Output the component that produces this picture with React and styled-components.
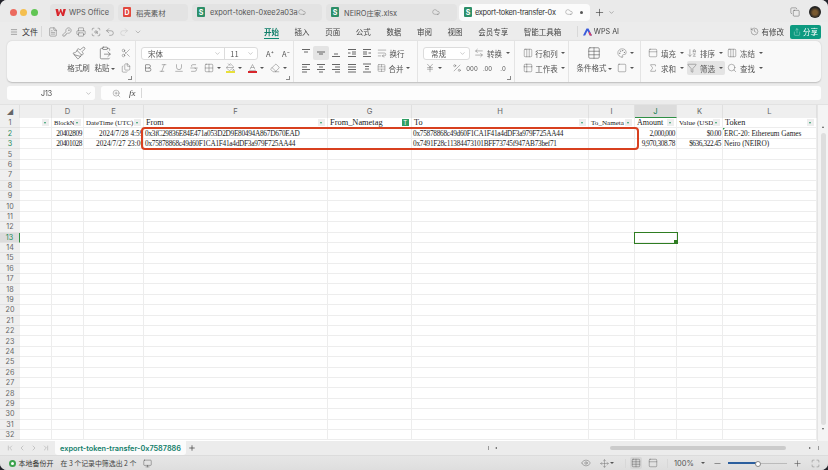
import React from 'react';
import styled, { createGlobalStyle } from 'styled-components';
import {
  Menu, FileText, KeyRound, Printer, ScanSearch, Undo2, Redo2, ChevronDown, Cloud, Plus, Copy,
  Scissors, Paintbrush, ClipboardPaste, Files, Bold, Italic, Underline, Strikethrough, Grid2x2,
  PaintBucket, Baseline, Eraser, WrapText, TableCellsMerge,
  ArrowLeftRight, JapaneseYen, Percent, Table2, Table, Palette, Square,
  Sigma, ArrowDownAZ, Filter, Search, Columns3, Share, History, ZoomIn, ChevronLeft, ChevronRight,
  ChevronFirst, ChevronLast, Eye, Move, PanelTop, Minus, Maximize, Monitor
} from 'lucide-react';

const Global = createGlobalStyle`
  html, body { margin: 0; padding: 0; background: #23232b; }
  #root { width: 828px; height: 470px; overflow: hidden; }
  * { box-sizing: border-box; }
`;

const uiFont = `"Noto Sans CJK SC", "Inter", sans-serif`;

const Win = styled.div`
  width: 828px; height: 470px; background: #ececec; border-radius: 7px; overflow: hidden;
  display: flex; flex-direction: column; font-family: ${uiFont}; color: #444; font-size: 8px;
  filter: blur(0.3px);
`;

/* title bar */
const TitleBar = styled.div`
  height: 22px; display: flex; align-items: center; padding: 2px 0 0 9.5px; flex: none; background: #eaeaea;
`;
const Lights = styled.div`display: flex; gap: 3.5px; width: 40.5px; flex: none;`;
const Light = styled.span`width: 7px; height: 7px; border-radius: 50%; background: ${p => p.$c};`;
const Tab = styled.div`
  width: ${p => p.$w}px; height: 17px; margin-right: ${p => p.$mr ?? 4}px; border-radius: 4px; flex: none;
  background: ${p => p.$active ? '#fbfbfb' : '#e3e3e3'}; display: flex; align-items: center; gap: 3px;
  padding: 0 ${p => p.$pr ?? 6}px 0 5px; font-family: "Inter", "Noto Sans CJK SC", sans-serif; font-size: 7.4px; color: #555;
  white-space: nowrap;
`;
const TabLabel = styled.span`flex: 1; min-width: 0; color: ${p => p.$c ?? '#555'}; letter-spacing: ${p => p.$track ?? 0}px;`;
const Badge = styled.span`
  width: 8px; height: 10px; background: ${p => p.$c}; border-radius: 1px; flex: none; color: #fff; font-size: 7px;
  display: flex; align-items: center; justify-content: center; font-weight: 700;
`;
const Spot = styled.span`width: 3px; height: 3px; border-radius: 50%; background: #555; flex: none; margin: 0 7px 0 4px;`;
const TitleRight = styled.div`margin-left: auto; display: flex; align-items: center; gap: 9px; padding-right: 7px; color: #444;`;
const Avatar = styled.span`width: 12px; height: 12px; border-radius: 50%; background: radial-gradient(circle at 50% 55%, #7a5a30 0 25%, #222 60%);`;

/* menu row */
const MenuRow = styled.div`height: 19px; display: flex; align-items: center; padding-left: 10px; flex: none;`;
const MenuFile = styled.div`display: flex; align-items: center; gap: 4px; width: 31px; font-size: 8px; color: #333;`;
const Sep = styled.span`width: 1px; height: ${p => p.$h ?? 11}px; background: #d8d8d8; flex: none; margin: 0 ${p => p.$m ?? 0}px;`;
const QuickIcons = styled.div`display: flex; align-items: center; gap: 4.4px; margin-left: 5.5px; width: 216.5px; color: #555;`;
const MenuTabs = styled.div`display: flex; align-items: center; gap: 15.6px;`;
const MenuTab = styled.span`
  font-size: 7.5px; color: ${p => p.$active ? '#0f7d68' : '#444'}; position: relative; font-weight: ${p => p.$active ? 700 : 400};
  ${p => p.$active && `&::after { content: ""; position: absolute; left: 0; right: 0; bottom: -2px; height: 1.5px; background: #0f8a72; }`}
`;
const AiTag = styled.span`display: flex; align-items: center; gap: 2px; margin-left: 5px; font-family: "Inter", sans-serif; font-size: 7.2px; color: #444;`;
const MenuRight = styled.div`margin-left: auto; display: flex; align-items: center; gap: 6px; padding-right: 7px;`;
const Modified = styled.span`display: flex; align-items: center; gap: 3px; font-size: 7.5px; color: #444;`;
const ShareBtn = styled.span`
  width: 31px; height: 14px; border-radius: 2px; background: #0d9a80; color: #fff; display: flex;
  align-items: center; justify-content: center; gap: 2px; font-size: 7.5px;
`;

/* ribbon */
const Ribbon = styled.div`
  margin: 0 7px; height: 41px; flex: none; background: #f9f9f9; border-radius: 5px; display: flex;
  box-shadow: 0 0.5px 1.5px rgba(0,0,0,.2);
`;
const Group = styled.div`
  width: ${p => p.$w}px; flex: none; padding: 5px 0 7px ${p => p.$pl ?? 0}px; display: flex; position: relative;
  ${p => !p.$last && 'border-right: 1px solid #e4e4e4;'}
  ${p => p.$launcher && `&::after { content: ""; position: absolute; right: 3px; bottom: 2px; width: 3px; height: 3px; border-right: 1px solid #888; border-bottom: 1px solid #888; }`}
`;
const Stack = styled.div`display: flex; flex-direction: column; justify-content: space-between; height: 100%; width: ${p => p.$w ? p.$w + 'px' : 'auto'}; flex: none;`;
const ToolRow = styled.div`display: flex; align-items: center; height: 14px; margin-left: ${p => p.$ml ?? 0}px;`;
const Tool = styled.div`
  width: ${p => p.$w}px; height: 14px; flex: none; display: flex; align-items: center; justify-content: ${p => p.$left ? 'flex-start' : 'center'};
  gap: ${p => p.$gap ?? 2}px; color: #555; font-size: 7.5px; white-space: nowrap; margin-left: ${p => p.$ml ?? 0}px; padding-left: ${p => p.$pl ?? 0}px;
  ${p => p.$on && 'background: #e4e4e4; border-radius: 2px;'}
`;
const Big = styled.div`
  width: ${p => p.$w}px; flex: none; display: flex; flex-direction: column; align-items: center; justify-content: space-between;
  height: 100%; color: #555; font-size: 7.5px; white-space: nowrap; line-height: 14px;
`;
const Caret = styled.span`
  display: inline-block; width: 0; height: 0; border-left: 2px solid transparent; border-right: 2px solid transparent;
  border-top: 2.5px solid #555; margin-left: 1px; flex: none; vertical-align: middle;
`;
const Field = styled.div`
  width: ${p => p.$w}px; height: 13px; border: 1px solid #dcdcdc; background: #fff; border-radius: 3px; display: flex; align-items: center; flex: none; font-size: 7.5px; color: #555;
`;
const FieldPart = styled.div`
  width: ${p => p.$w}px; display: flex; align-items: center; justify-content: space-between; padding: 0 3px 0 ${p => p.$pl ?? 6}px; height: 100%;
  ${p => p.$line && 'border-right: 1px solid #dcdcdc;'}
`;
const ColorIcon = styled.span`
  display: flex; flex-direction: column; align-items: center; gap: 0;
  &::after { content: ""; width: 9px; height: 2px; background: ${p => p.$c}; margin-top: -1px; }
`;
const TinyGlyph = styled.span`font-family: "Inter", sans-serif; font-size: ${p => p.$s ?? 6}px; color: #555;`;

/* formula */
const FormulaRow = styled.div`height: 14px; margin: 4px 7px 0; display: flex; gap: 6px; flex: none;`;
const NameBox = styled.div`
  width: 88px; background: #fdfdfd; border-radius: 3px; display: flex; align-items: center; justify-content: space-between;
  padding: 0 3px 0 34px; font-family: "Inter", sans-serif; font-size: 7px; color: #444;
`;
const FxBox = styled.div`
  flex: 1; background: #fdfdfd; border-radius: 3px; display: flex; align-items: center; padding-left: 11px; color: #555;
`;
const Fx = styled.i`font-family: "Liberation Serif", serif; font-size: 9px; margin-left: 8px; width: 12px; color: #444;`;

/* sheet */
const Sheet = styled.div`
  margin-top: 4px; flex: none; height: 337px; position: relative; background: #fff; display: flex; flex-direction: column;
  border-top: 1px solid #e2e2e2;
`;
const HeaderRow = styled.div`display: flex; height: 13px; background: #efefef; flex: none;`;
const HeadCell = styled.div`
  width: ${p => p.$w}px; flex: none; display: flex; align-items: center; justify-content: center; font-family: "Inter", sans-serif;
  font-size: 7.6px; color: #666; border-right: 1px solid #e0e0e0;
  ${p => p.$on && 'background: #dcdcdc; color: #0f7d4f; border-bottom: 1px solid #2f8f45;'}
`;
const Row = styled.div`display: flex; height: ${p => p.$h}px; flex: none;`;
const RowNum = styled.div`
  width: 20px; flex: none; display: flex; align-items: center; justify-content: center; font-family: "Inter", sans-serif; font-size: 7.2px;
  background: ${p => p.$sel ? '#dcdcdc' : '#efefef'}; color: ${p => p.$green ? '#1f8a5a' : '#666'}; border-bottom: 1px solid #e2e2e2;
  ${p => p.$sel && 'border-right: 1.5px solid #2f8f45;'}
`;
const Cell = styled.div`
  width: ${p => p.$w}px; flex: none; border-right: 1px solid #ededed; border-bottom: 1px solid #ededed; position: relative;
  display: flex; align-items: center; justify-content: ${p => p.$right ? 'flex-end' : 'flex-start'};
  font-family: "Liberation Serif", serif; font-size: 7.3px; letter-spacing: ${p => p.$track ?? 0}px; color: #222;
  padding: 0 1px 0 ${p => p.$indent ?? 1}px; white-space: nowrap; overflow: hidden;
  ${p => p.$sel && 'outline: 1.5px solid #2f7d22; outline-offset: -0.5px; overflow: visible; z-index: 2;'}
  ${p => p.$flag && `&::before { content: ""; position: absolute; left: 0; top: 0; border-top: 2.5px solid #2a9a4a; border-right: 2.5px solid transparent; }`}
`;
const HeadText = styled.span`flex: 1; min-width: 0; overflow: visible; padding-left: 1px; font-size: ${p => p.$fs}px;`;
const FilterBtn = styled.span`
  width: 6.5px; height: 6.5px; background: ${p => p.$active ? '#2f9e63' : '#eeeeee'};
  flex: none; display: flex; align-items: center; justify-content: center; margin-right: 1.5px; color: #fff; font-size: 6px; font-family: "Inter", sans-serif;
  &::after { ${p => !p.$active && `content: ""; border-left: 1.5px solid transparent; border-right: 1.5px solid transparent; border-top: 2px solid #2a9a6a;`} }
`;
const Handle = styled.span`position: absolute; right: -2px; bottom: -2px; width: 4px; height: 4px; background: #2f7d22;`;
const Highlight = styled.div`
  position: absolute; left: 141px; top: 22px; width: 498px; height: 23px; border: 2px solid #d8401f; border-radius: 4px; pointer-events: none; z-index: 3;
`;
const VScroll = styled.div`
  position: absolute; right: 0; top: 0; bottom: 0; width: 11px; background: #f4f4f4; border-left: 1px solid #e4e4e4; display: flex;
  flex-direction: column; align-items: center; padding-top: 21px; z-index: 1;
`;
const Arrow = styled.span`
  width: 0; height: 0; border-left: 1.5px solid transparent; border-right: 1.5px solid transparent;
  ${p => p.$down ? 'border-top: 2px solid #555;' : 'border-bottom: 2px solid #555;'}
`;
const Thumb = styled.div`width: 5px; height: 292px; margin: 5px 0 3px; background: #dedede; border-radius: 3px;`;

/* bottom */
const SheetBar = styled.div`height: 14px; flex: none; display: flex; align-items: center; background: #ececec; color: #777;`;
const NavIcons = styled.div`display: flex; gap: 0; width: 55px; padding-left: 4px;`;
const NavItem = styled.span`width: 12px; display: flex; justify-content: center;`;
const SheetTab = styled.div`
  width: 131px; height: 14px; background: #fbfbfb; border-radius: 0 0 3px 3px; color: #0f7d68; font-family: "Inter", sans-serif;
  font-size: 7.3px; font-weight: 600; display: flex; align-items: center; justify-content: center;
`;
const AddSheet = styled.span`margin-left: 2px; color: #333; display: flex;`;
const HScroll = styled.div`margin-left: auto; width: 340px; display: flex; align-items: center; padding-right: 9px;`;
const HTrack = styled.div`flex: 1; display: flex; align-items: center; padding-left: 113px; padding-right: 20px; gap: 0;`;
const HThumb = styled.div`width: 176px; height: 4.5px; background: #cbcbcb; border-radius: 2px;`;
const Tick = styled.span`width: 1px; height: 4px; background: #999; margin: ${p => p.$end ? '0 0 0 7px' : '0 6px 0 0'}; flex: none;`;
const HArrow = styled.span`
  width: 0; height: 0; border-top: 1.5px solid transparent; border-bottom: 1.5px solid transparent; flex: none;
  ${p => p.$right ? 'border-left: 2px solid #555;' : 'border-right: 2px solid #555;'}
`;
const Status = styled.div`
  flex: 1; display: flex; align-items: center; padding: 0 5px 0 9px; background: linear-gradient(#e6e6e6, #dedede); border-top: 1px solid #dcdcdc; font-size: 7px; color: #333;
`;
const Dot = styled.span`width: 7px; height: 7px; border-radius: 50%; border: 2px solid #3ca34d; background: #fff; margin-right: 2.5px; flex: none;`;
const StatusInfo = styled.span`margin-left: 7px; color: #444; font-size: 6.9px;`;
const StatusRight = styled.div`margin-left: auto; display: flex; align-items: center; color: #555;`;
const SItem = styled.span`
  width: ${p => p.$w}px; height: 12px; display: flex; align-items: center; justify-content: center; flex: none; font-family: "Inter", sans-serif; font-size: 7.5px;
  ${p => p.$on && 'background: #d6d6d6; border-radius: 2px;'}
`;
const Slider = styled.div`
  width: 59px; height: 1px; background: #bbb; position: relative; flex: none;
  &::before { content: ""; position: absolute; left: 0; top: -0.5px; height: 2px; width: 29px; background: #2c5f9e; }
  &::after { content: ""; position: absolute; left: 27px; top: -1.5px; width: 4px; height: 4px; border-radius: 50%; background: #fff; border: 0.5px solid #888; }
`;

const I = { size: 10, strokeWidth: 1 };
const L = { size: 14, strokeWidth: 1 };

/* alignment glyphs: each line is [x1, x2, y] in a 10×10 box */
const Lines = ({ rows }) => (
  <svg width="10" height="10" viewBox="0 0 10 10" stroke="#555" strokeWidth="0.9" fill="none">
    {rows.map(([a, b, y], i) => <path key={i} d={`M${a} ${y}H${b}`} />)}
  </svg>
);
const alignRows = {
  top: [[1, 9, 1.5], [3, 7, 4]],
  mid: [[1, 9, 4], [3, 7, 6]],
  bottom: [[3, 7, 6], [1, 9, 8.5]],
  outdent: [[1, 9, 1.5], [5, 9, 4], [5, 9, 6], [1, 9, 8.5], [1, 3.5, 5]],
  indent: [[1, 9, 1.5], [1, 5, 4], [1, 5, 6], [1, 9, 8.5], [6.5, 9, 5]],
  left: [[1, 9, 1.5], [1, 6, 4], [1, 9, 6.5], [1, 6, 9]],
  center: [[1, 9, 1.5], [3, 7, 4], [1, 9, 6.5], [3, 7, 9]],
  right: [[1, 9, 1.5], [4, 9, 4], [1, 9, 6.5], [4, 9, 9]],
  justify: [[1, 9, 1.5], [1, 9, 4], [1, 9, 6.5], [1, 9, 9]],
  spread: [[1, 9, 1], [3, 7, 3.5], [3, 7, 6], [1, 9, 9]],
};

const colW = [32, 32, 60, 184, 84, 177, 46, 42, 46, 94];
const heads = ['', 'D', 'E', 'F', 'G', 'H', 'I', 'J', 'K', 'L'];
const titles = ['', 'BlockN', 'DateTime (UTC)', 'From', 'From_Nametag', 'To', 'To_Nameta', 'Amount', 'Value (USD', 'Token'];
const titleSize = [8, 6.6, 6.9, 8.2, 8.4, 8.2, 7.1, 8, 7.1, 8.2];
const r2 = ['', '20402809', '2024/7/28 4:59', '0x3fC29836E84E471a053D2D9E80494A867D670EAD', '', '0x75878868c49d60F1CA1F41a4dDF3a979F725AA44', '', '2,000,000', '$0.00', 'ERC-20: Ethereum Games'];
const r3 = ['', '20401028', '2024/7/27 23:06', '0x75878868c49d60F1CA1F41a4dDF3a979F725AA44', '', '0x7491F28c11384473101BFF73745f947AB73bef71', '', '9,970,308.78', '$636,322.45', 'Neiro (NEIRO)'];
const rightCols = [1, 7, 8];
const trackOf = i => (i === 3 || i === 5 ? -0.27 : i === 9 ? -0.04 : i === 2 ? 0 : -0.42);
const nums = [5, 6, 7, 8, 9, 10, 11, 12, 13, 14, 15, 16, 17, 18, 19, 20, 21, 22, 23, 24, 25, 26, 27, 28, 29, 30, 31, 32];

const DataRow = ({ n, vals, h, dateIndent }) => (
  <Row $h={h}>
    <RowNum $green>{n}</RowNum>
    {colW.map((w, i) => (
      <Cell key={i} $w={w} $right={rightCols.includes(i)} $track={trackOf(i)} $indent={i === 2 ? dateIndent : 1} $flag={n === 2 && i === 9}>{vals[i]}</Cell>
    ))}
  </Row>
);

export default function App() {
  return (
    <Win>
      <Global />
      <TitleBar>
        <Lights>
          <Light $c="#ec6a5e" /><Light $c="#f4bf4f" /><Light $c="#61c554" />
        </Lights>
        <Tab $w={64}>
          <svg width="11" height="9" viewBox="0 0 11 9"><path d="M0.5 1h2.5l1 4 1.2-4h1l1.2 4 1-4h2.5L9 8H7.2L5.5 4 3.8 8H2z" fill="#d8262c" /></svg>
          <TabLabel>WPS Office</TabLabel>
        </Tab>
        <Tab $w={70} $pr={4}>
          <Badge $c="#e2483d">D</Badge><TabLabel>&nbsp;稻壳素材</TabLabel>
        </Tab>
        <Tab $w={130} $pr={16}>
          <Badge $c="#2d8f68">S</Badge><TabLabel>&nbsp;export-token-0xee2a03a</TabLabel><Cloud size={8} strokeWidth={1} />
        </Tab>
        <Tab $w={131} $mr={2} $pr={17}>
          <Badge $c="#2d8f68">S</Badge><TabLabel>&nbsp;NEIRO庄家.xlsx</TabLabel><Cloud size={8} strokeWidth={1} />
        </Tab>
        <Tab $w={131} $active $mr={4} $pr={0}>
          <Badge $c="#2d8f68">S</Badge><TabLabel $c="#333" $track={-0.28}>export-token-transfer-0x</TabLabel><Cloud size={8} strokeWidth={1} />
          <Spot />
        </Tab>
        <Plus size={11} strokeWidth={1.3} color="#333" />
        <ChevronDown size={7} strokeWidth={1.2} style={{ marginLeft: 3 }} />
        <TitleRight>
          <Copy size={10} strokeWidth={1} /><Avatar />
        </TitleRight>
      </TitleBar>

      <MenuRow>
        <MenuFile><Menu size={8} strokeWidth={1.2} />文件</MenuFile>
        <Sep />
        <QuickIcons>
          <FileText {...I} /><KeyRound {...I} /><Printer {...I} /><ScanSearch {...I} /><Undo2 {...I} />
          <Redo2 {...I} color="#bbb" /><ChevronDown size={8} strokeWidth={1} />
        </QuickIcons>
        <MenuTabs>
          <MenuTab $active>开始</MenuTab><MenuTab>插入</MenuTab><MenuTab>页面</MenuTab><MenuTab>公式</MenuTab>
          <MenuTab>数据</MenuTab><MenuTab>审阅</MenuTab><MenuTab>视图</MenuTab><MenuTab>会员专享</MenuTab><MenuTab>智能工具箱</MenuTab>
          <Sep />
        </MenuTabs>
        <AiTag>
          <svg width="9" height="8" viewBox="0 0 9 8"><path d="M3.5 0.5h2L9 7.5H6.8L4.5 2.8 2.2 7.5H0z" fill="#3b5bdb" /><path d="M6.8 7.5L5.6 5l1-1.6L9 7.5z" fill="#e0405e" /></svg>
          WPS AI
        </AiTag>
        <MenuRight>
          <Modified><History size={9} strokeWidth={1} />有修改</Modified>
          <ShareBtn><Share size={8} strokeWidth={1} />分享</ShareBtn>
        </MenuRight>
      </MenuRow>

      <Ribbon>
        <Group $w={129} $pl={59} $launcher>
          <Big $w={25}><Paintbrush {...L} /><span>格式刷</span></Big>
          <Big $w={27}><ClipboardPaste {...L} /><span>粘贴<Caret /></span></Big>
          <Stack $w={16}>
            <Tool $w={16}><Scissors {...I} /></Tool>
            <Tool $w={16}><Files {...I} /></Tool>
          </Stack>
        </Group>

        <Group $w={158} $pl={5} $launcher>
          <Stack>
            <ToolRow>
              <Field $w={117}>
                <FieldPart $w={84} $line>宋体<ChevronDown size={7} strokeWidth={1} /></FieldPart>
                <FieldPart $w={32} $pl={5}>11<ChevronDown size={7} strokeWidth={1} /></FieldPart>
              </Field>
              <Tool $w={20} $ml={2}>A⁺</Tool><Tool $w={12}>A⁻</Tool>
            </ToolRow>
            <ToolRow $ml={-1}>
              <Tool $w={15}><Bold {...I} strokeWidth={1.4} /></Tool>
              <Tool $w={16}><Italic {...I} /></Tool>
              <Tool $w={15}><Underline {...I} /></Tool>
              <Tool $w={16}><Strikethrough {...I} /></Tool>
              <Tool $w={21}><Grid2x2 {...I} /><Caret /></Tool>
              <Tool $w={22}><ColorIcon $c="#e8e03a"><PaintBucket size={9} strokeWidth={1} /></ColorIcon><Caret /></Tool>
              <Tool $w={22}><ColorIcon $c="#d8262c"><Baseline size={9} strokeWidth={1} /></ColorIcon><Caret /></Tool>
              <Tool $w={22}><Eraser {...I} /><Caret /></Tool>
            </ToolRow>
          </Stack>
        </Group>

        <Group $w={124} $pl={4}>
          <Stack>
            <ToolRow>
              <Tool $w={15.3}><Lines rows={alignRows.top} /></Tool>
              <Tool $w={15.3} $on><Lines rows={alignRows.mid} /></Tool>
              <Tool $w={15.3}><Lines rows={alignRows.bottom} /></Tool>
              <Tool $w={15.3}><Lines rows={alignRows.outdent} /></Tool>
              <Tool $w={15.3}><Lines rows={alignRows.indent} /></Tool>
              <Tool $w={36} $left $pl={3}><WrapText {...I} />换行</Tool>
            </ToolRow>
            <ToolRow>
              <Tool $w={15.3}><Lines rows={alignRows.left} /></Tool>
              <Tool $w={15.3}><Lines rows={alignRows.center} /></Tool>
              <Tool $w={15.3}><Lines rows={alignRows.right} /></Tool>
              <Tool $w={15.3}><Lines rows={alignRows.justify} /></Tool>
              <Tool $w={15.3}><Lines rows={alignRows.spread} /></Tool>
              <Tool $w={36} $left $pl={3}><TableCellsMerge {...I} />合并<Caret /></Tool>
            </ToolRow>
          </Stack>
        </Group>

        <Group $w={97} $pl={5} $launcher>
          <Stack>
            <ToolRow>
              <Field $w={47}><FieldPart $w={46} $pl={7}>常规<ChevronDown size={7} strokeWidth={1} /></FieldPart></Field>
              <Tool $w={36} $ml={4} $gap={3}><ArrowLeftRight {...I} />转换<Caret /></Tool>
            </ToolRow>
            <ToolRow>
              <Tool $w={20}><JapaneseYen {...I} /><Caret /></Tool>
              <Tool $w={15} $ml={6}><Percent {...I} /></Tool>
              <Tool $w={16}><TinyGlyph>000</TinyGlyph></Tool>
              <Tool $w={15}><TinyGlyph>.00</TinyGlyph></Tool>
              <Tool $w={16}><TinyGlyph>.0</TinyGlyph></Tool>
            </ToolRow>
          </Stack>
        </Group>

        <Group $w={54} $pl={6}>
          <Stack>
            <Tool $w={46}><Columns3 {...I} />行和列<Caret /></Tool>
            <Tool $w={46}><Table2 {...I} />工作表<Caret /></Tool>
          </Stack>
        </Group>

        <Group $w={72} $pl={4}>
          <Big $w={42}><Table {...L} /><span>条件格式<Caret /></span></Big>
          <Stack $w={20}>
            <Tool $w={20}><Palette {...I} /><Caret /></Tool>
            <Tool $w={20}><Square {...I} /><Caret /></Tool>
          </Stack>
        </Group>

        <Group $w={180} $pl={7} $last>
          <Stack>
            <ToolRow>
              <Tool $w={39} $left $gap={3}><PanelTop {...I} />填充<Caret /></Tool>
              <Tool $w={40} $left $gap={3}><ArrowDownAZ {...I} />排序<Caret /></Tool>
              <Tool $w={39} $left $gap={3}><Columns3 {...I} />冻结<Caret /></Tool>
            </ToolRow>
            <ToolRow>
              <Tool $w={39} $left $gap={3}><Sigma {...I} />求和<Caret /></Tool>
              <Tool $w={38} $left $gap={3} $on><Filter {...I} />筛选<Caret /></Tool>
              <Tool $w={39} $left $gap={3} $ml={2}><Search {...I} />查找<Caret /></Tool>
            </ToolRow>
          </Stack>
        </Group>
      </Ribbon>

      <FormulaRow>
        <NameBox>J13<ChevronDown size={7} strokeWidth={1} /></NameBox>
        <FxBox><ZoomIn size={9} strokeWidth={1} /><Fx>fx</Fx><Sep $h={10} /></FxBox>
      </FormulaRow>

      <Sheet>
        <HeaderRow>
          <HeadCell $w={20}>◢</HeadCell>
          {colW.map((w, i) => <HeadCell key={i} $w={w} $on={heads[i] === 'J'}>{heads[i]}</HeadCell>)}
        </HeaderRow>
        <Row $h={10.4}>
          <RowNum>1</RowNum>
          {colW.map((w, i) => (
            <Cell key={i} $w={w}>
              <HeadText $fs={titleSize[i]}>{titles[i]}</HeadText>
              <FilterBtn $active={i === 4}>{i === 4 ? 'T' : ''}</FilterBtn>
            </Cell>
          ))}
        </Row>
        <DataRow n={2} vals={r2} h={10.4} dateIndent={15} />
        <DataRow n={3} vals={r3} h={10.6} dateIndent={12} />
        {nums.map(n => (
          <Row key={n} $h={10.4}>
            <RowNum $green={n === 13} $sel={n === 13}>{n}</RowNum>
            {colW.map((w, i) => (
              <Cell key={i} $w={w} $sel={n === 13 && i === 7}>
                {n === 13 && i === 7 && <Handle />}
              </Cell>
            ))}
          </Row>
        ))}
        <Highlight />
        <VScroll>
          <Arrow />
          <Thumb />
          <Arrow $down />
        </VScroll>
      </Sheet>

      <SheetBar>
        <NavIcons>
          <NavItem><ChevronFirst size={8} strokeWidth={1} /></NavItem>
          <NavItem><ChevronLeft size={8} strokeWidth={1} /></NavItem>
          <NavItem><ChevronRight size={8} strokeWidth={1} /></NavItem>
          <NavItem><ChevronLast size={8} strokeWidth={1} /></NavItem>
        </NavIcons>
        <SheetTab>export-token-transfer-0x7587886</SheetTab>
        <AddSheet><Plus size={8} strokeWidth={2} /></AddSheet>
        <HScroll>
          <Tick /><HArrow />
          <HTrack><HThumb /></HTrack>
          <HArrow $right /><Tick $end />
        </HScroll>
      </SheetBar>

      <Status>
        <Dot />本地备份开
        <StatusInfo>在 3 个记录中筛选出 2 个</StatusInfo>
        <SItem $w={22}><Monitor size={9} strokeWidth={1} /></SItem>
        <StatusRight>
          <SItem $w={16}><Eye size={10} strokeWidth={1} /></SItem>
          <SItem $w={26}><Move size={9} strokeWidth={1} /><Caret /></SItem>
          <SItem $w={10}><Sep $h={9} /></SItem>
          <SItem $w={12} $on><Table {...I} /></SItem>
          <SItem $w={22}><PanelTop {...I} /></SItem>
          <SItem $w={6}><Sep $h={9} /></SItem>
          <SItem $w={28}>100%</SItem>
          <SItem $w={8}><Caret /></SItem>
          <SItem $w={22}><Minus size={9} strokeWidth={1.6} /></SItem>
          <Slider />
          <SItem $w={21}><Plus size={9} strokeWidth={1.6} /></SItem>
          <SItem $w={15}><Maximize size={9} strokeWidth={1} /></SItem>
        </StatusRight>
      </Status>
    </Win>
  );
}
